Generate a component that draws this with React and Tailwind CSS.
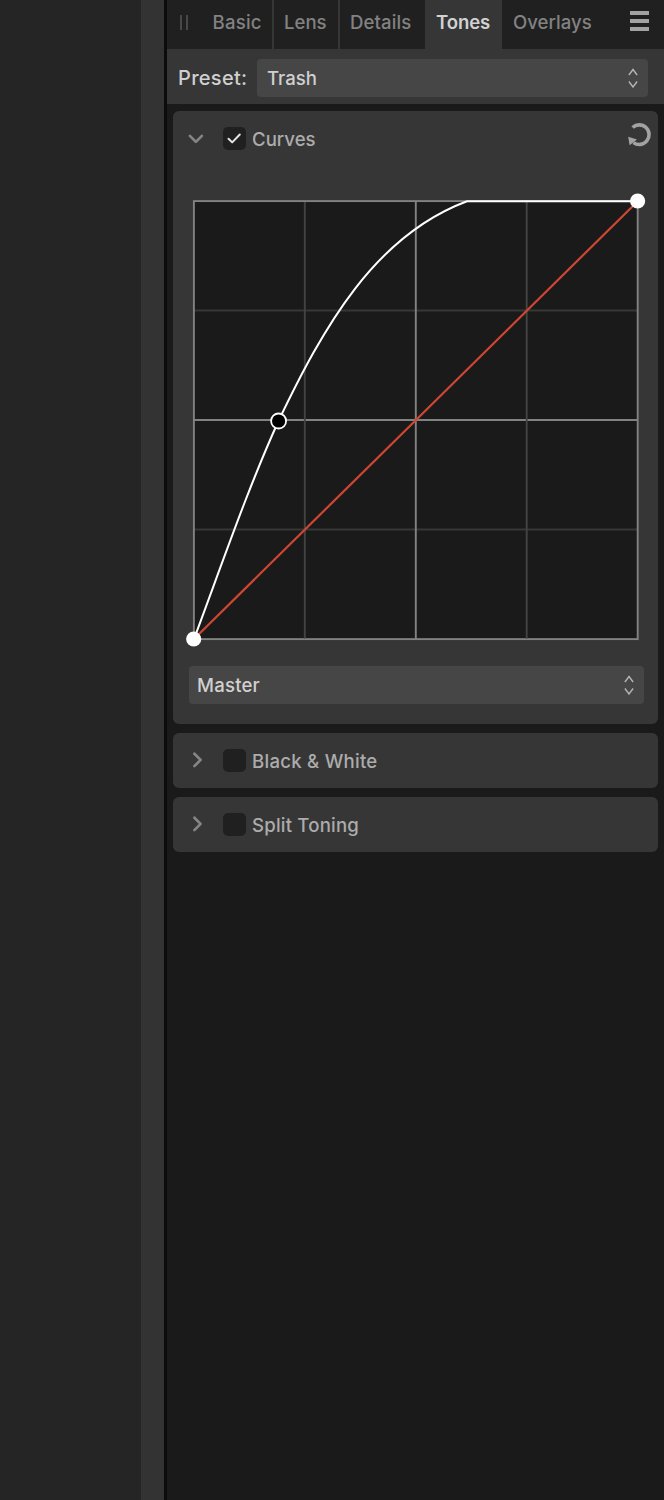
const TABS = [
  { name: "Basic", box: "w-[72px] pl-[10.5px] border-r-2", text: "w-[50px]", ls: "tracking-[0.2px]" },
  { name: "Lens", box: "w-[66px] pl-[10px] border-r-2", text: "w-[44px]", ls: "tracking-[0px]" },
  { name: "Details", box: "w-[85px] pl-[10px]", text: "w-[64px]", ls: "tracking-[0.1px]" },
  { name: "Tones", box: "w-[77px] pl-[11px] bg-[#363636]", text: "w-[56px] text-[#d2d2d2] font-semibold", ls: "tracking-[-0.1px]" },
  { name: "Overlays", box: "w-[100px] pl-[11px]", text: "w-[80px]", ls: "tracking-[0px]" },
];

function UpDown() {
  return (
    <svg width="12" height="20" viewBox="0 0 12 20" fill="none" stroke="#b4b4b4" strokeWidth="1.4">
      <path d="M1.9 7L6 1.5L10.1 7M1.9 13.5L6 19L10.1 13.5" />
    </svg>
  );
}

function Select({ label, className }) {
  return (
    <div className={`flex h-[38px] items-center justify-between rounded-[4px] bg-[#464646] pr-[9px] font-[450] text-[#d0d0d0] ${className}`}>
      <span>{label}</span>
      <UpDown />
    </div>
  );
}

function Checkbox({ checked }) {
  return (
    <span className="flex size-[23px] items-center justify-center rounded-[5px] bg-[#202020]">
      {checked && (
        <svg width="23" height="23" viewBox="0 0 23 23" fill="none" stroke="#e4e4e4" strokeWidth="2" strokeLinecap="round" strokeLinejoin="round">
          <path d="M5.5 11.7L9.2 15.4L16.8 7.5" />
        </svg>
      )}
    </span>
  );
}

function Header({ title, open, tracking }) {
  return (
    <div className="flex h-[54px] items-center pl-[14px]">
      <svg width="20" height="20" viewBox="0 0 20 20" fill="none" stroke="#858585" strokeWidth="2.7" strokeLinecap="round" strokeLinejoin="round">
        <path d={open ? "M2.9 7.9L8.9 13.9L14.9 7.9" : "M7.4 3.7L13.6 9.9L7.4 16.1"} />
      </svg>
      <div className="ml-[16px]">
        <Checkbox checked={open} />
      </div>
      <span className={`ml-[6px] mt-[2px] font-[450] text-[#acacac] ${tracking}`}>{title}</span>
    </div>
  );
}

function CurveGraph() {
  return (
    <svg className="block" width="462" height="456" viewBox="185 192 462 456" fill="none">
      <rect x="194" y="201" width="444" height="438" fill="#1a1a1a" />
      <path d="M194 310.5H638M194 529.5H638" stroke="#373737" strokeWidth="2.2" />
      <path d="M194 420H638M415.8 201V639" stroke="#828282" strokeWidth="1.9" />
      <rect x="193.9" y="201.1" width="443.8" height="438" stroke="#828282" strokeWidth="1.9" />
      <path d="M304.8 202V638.5M526.7 202V638.5" stroke="#434343" strokeWidth="1.9" />
      <path d="M194 639L638 201" stroke="#cf4632" strokeWidth="2.2" />
      <path d="M194 639C222 564 248 488 278.5 421C323 328 374 236 467 201.2H638" stroke="#fff" strokeWidth="2" />
      <circle cx="193.7" cy="639" r="7.6" fill="#fff" />
      <circle cx="637.6" cy="201" r="7.6" fill="#fff" />
      <circle cx="278.6" cy="421" r="7.5" fill="#000" stroke="#fff" strokeWidth="1.8" />
    </svg>
  );
}

export default function App() {
  return (
    <div className="flex h-[1500px] w-[664px] overflow-hidden bg-[#1a1a1a] font-['Inter',sans-serif] text-[18.6px] leading-[24px] whitespace-nowrap">
      <div className="w-[141px] shrink-0 bg-[#252525]" />
      <div className="w-[22.5px] shrink-0 bg-[#333333]" />
      <div className="w-[3.5px] shrink-0 bg-[#0c0c0c]" />
      <main className="w-[497px] shrink-0">
        <nav className="flex h-[49px] bg-[#202020] font-medium text-[#828282]">
          <div className="flex w-[35px] shrink-0 gap-[4px] pl-[13px] pt-[15px]">
            <i className="h-[15px] w-[2px] bg-[#484848]" />
            <i className="h-[15px] w-[2px] bg-[#484848]" />
          </div>
          {TABS.map((t) => (
            <div key={t.name} className={`h-[49px] shrink-0 border-[#363636] pt-[9.5px] ${t.box}`}>
              <span className={`block ${t.text} ${t.ls}`}>{t.name}</span>
            </div>
          ))}
          <div className="ml-[28px] flex w-[19px] shrink-0 flex-col gap-[4px] pt-[11px]">
            <i className="h-[4px] shrink-0 bg-[#a2a2a2]" />
            <i className="h-[4px] shrink-0 bg-[#a2a2a2]" />
            <i className="h-[4px] shrink-0 bg-[#a2a2a2]" />
          </div>
        </nav>
        <div className="flex h-[55px] items-start bg-[#363636] pt-[10px]">
          <span className="w-[90px] pl-[11px] pt-[7px] text-[20px] font-[450] tracking-[0.3px] text-[#d0d0d0]">Preset:</span>
          <Select label="Trash" className="w-[391px] pl-[10px]" />
        </div>
        <div className="flex flex-col gap-[9px] pl-[6px] pt-[7px]">
          <section className="h-[613px] w-[485px] rounded-[6px] bg-[#363636]">
            <div className="flex justify-between">
              <Header title="Curves" open tracking="tracking-[0px]" />
              <svg className="mr-[5px] mt-[10px]" width="28" height="28" viewBox="0 0 28 28" fill="none">
                <path d="M7.6 6.5A9.8 9.8 0 1 1 8.5 21.6" stroke="#a2a2a2" strokeWidth="3.6" />
                <path d="M3.2 15.8L12 18.6L4.6 24.2Z" fill="#a2a2a2" />
              </svg>
            </div>
            <div className="pl-[12px] pt-[27px]">
              <CurveGraph />
            </div>
            <Select label="Master" className="ml-[16px] mt-[18px] w-[455px] pl-[8px] tracking-[0.2px]" />
          </section>
          <section className="h-[55px] w-[485px] rounded-[6px] bg-[#363636]">
            <Header title="Black & White" tracking="tracking-[0.25px]" />
          </section>
          <section className="h-[55px] w-[485px] rounded-[6px] bg-[#363636]">
            <Header title="Split Toning" tracking="tracking-[0.2px]" />
          </section>
        </div>
      </main>
    </div>
  );
}
